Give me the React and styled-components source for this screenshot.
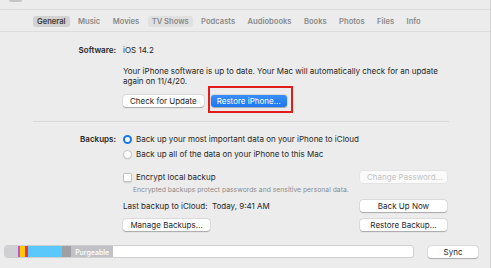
import React from "react";
import styled, { createGlobalStyle } from "styled-components";

const Global = createGlobalStyle`
  html, body { margin: 0; padding: 0; background: #ececec; }
  body { font-family: Inter, "Liberation Sans", Arial, sans-serif; -webkit-font-smoothing: antialiased; }
`;

const Window = styled.div`
  width: 491px;
  height: 268px;
  background: #ececec;
  color: #262626;
  font-size: 8px;
  overflow: hidden;
  position: relative;
  border-right: 1px solid #d4d4d4;
  box-sizing: border-box;
`;

const TopStrip = styled.div`
  height: 9px;
  border-bottom: 1px solid #dcdcdc;
  display: flex;
  padding-left: 9px;
`;

const TopNub = styled.div`
  width: 13px;
  height: 2px;
  background: #c6c6c6;
  border-radius: 0 0 3px 3px;
`;

const TabBar = styled.div`
  height: 21px;
  display: flex;
  align-items: center;
  gap: 4.4px;
  padding-left: 33px;
  border-bottom: 1px solid #dcdcdc;
`;

const Tab = styled.div`
  height: 11px;
  line-height: 11px;
  margin-top: 1px;
  padding: 0 4px;
  border-radius: 3px;
  font-weight: 600;
  font-size: 7.6px;
  color: ${(p) => (p.$active ? "#3a3a3a" : "#8a8a8a")};
  background: ${(p) => (p.$active ? "#d2d2d2" : p.$hover ? "#e0e0e0" : "transparent")};
`;

const Content = styled.div`
  padding-top: 13px;
`;

const Row = styled.div`
  display: grid;
  grid-template-columns: 116px 1fr;
  column-gap: 7px;
  width: 447px;
  align-items: start;
`;

const Label = styled.div`
  text-align: right;
  font-weight: 600;
  line-height: 11px;
`;

const Value = styled.div`
  line-height: 11px;
  white-space: nowrap;
`;

const Indent = styled.div`
  padding-left: 123px;
  width: 324px;
  margin-top: ${(p) => p.$mt || 0}px;
  display: flex;
  justify-content: ${(p) => (p.$between ? "space-between" : "flex-start")};
  align-items: center;
  gap: ${(p) => p.$gap || 0}px;
`;

const Para = styled.div`
  line-height: 10px;
  white-space: nowrap;
`;

const Button = styled.div`
  height: 12px;
  line-height: 12px;
  box-sizing: border-box;
  padding: 0 ${(p) => p.$px || 7}px;
  width: ${(p) => (p.$w ? p.$w + "px" : "auto")};
  text-align: center;
  border-radius: 3px;
  font-size: 8px;
  background: ${(p) => (p.$primary ? "linear-gradient(#3a8ef8, #1b76f0)" : "#ffffff")};
  color: ${(p) => (p.$primary ? "#ffffff" : p.$disabled ? "#b4b4b4" : "#262626")};
  box-shadow: ${(p) =>
    p.$disabled
      ? "0 0 0 0.5px rgba(0,0,0,0.08)"
      : "0 0.5px 1px rgba(0,0,0,0.25), 0 0 0 0.5px rgba(0,0,0,0.1)"};
  opacity: ${(p) => (p.$disabled ? 0.75 : 1)};
  white-space: nowrap;
`;

const Highlight = styled.div`
  border: 2px solid #e41b1b;
  padding: 7px 4px 4px 1px;
  margin: -9px 0 -6px 0;
`;

const Divider = styled.div`
  margin: 14px 0 0 33px;
  width: 416px;
  height: 1px;
  background: #d8d8d8;
`;

const OptionLine = styled.div`
  display: flex;
  align-items: center;
  gap: 4px;
  line-height: 11px;
  white-space: nowrap;
  margin-top: ${(p) => p.$mt || 0}px;
`;

const Radio = styled.div`
  width: 9px;
  height: 9px;
  border-radius: 50%;
  box-sizing: border-box;
  flex: none;
  background: #ffffff;
  border: ${(p) => (p.$on ? "2.5px solid #1a74ee" : "0.5px solid #c4c4c4")};
  box-shadow: ${(p) => (p.$on ? "none" : "0 0.5px 1px rgba(0,0,0,0.12)")};
`;

const Check = styled.div`
  width: 9px;
  height: 9px;
  border-radius: 2px;
  flex: none;
  background: #fff;
  box-sizing: border-box;
  border: 0.5px solid #c4c4c4;
  box-shadow: 0 0.5px 1px rgba(0,0,0,0.12);
`;

const Small = styled.div`
  font-size: 6.8px;
  color: #8c8c8c;
  padding-left: 133px;
  margin-top: 2px;
  line-height: 9px;
  white-space: nowrap;
`;

const Footer = styled.div`
  display: flex;
  align-items: center;
  margin-top: 14px;
  padding-left: 4px;
  gap: 14px;
`;

const Storage = styled.div`
  width: 410px;
  height: 13px;
  box-sizing: border-box;
  border-radius: 3px;
  background: #ffffff;
  border: 0.5px solid #cfcfcf;
  display: flex;
  overflow: hidden;
`;

const Seg = styled.div`
  width: ${(p) => p.$w}px;
  background: ${(p) => p.$c};
  flex: none;
  color: #ffffff;
  font-size: 7px;
  line-height: 13px;
  text-align: center;
  font-weight: 500;
`;

const Spacer = styled.div`
  height: ${(p) => p.$h}px;
`;

export default function App() {
  const tabs = ["General", "Music", "Movies", "TV Shows", "Podcasts", "Audiobooks", "Books", "Photos", "Files", "Info"];
  return (
    <Window>
      <Global />
      <TopStrip>
        <TopNub />
      </TopStrip>
      <TabBar>
        {tabs.map((t) => (
          <Tab key={t} $active={t === "General"} $hover={t === "TV Shows"}>
            {t}
          </Tab>
        ))}
      </TabBar>
      <Content>
        <Row>
          <Label>Software:</Label>
          <Value>iOS 14.2</Value>
        </Row>
        <Indent $mt={10}>
          <Para>
            Your iPhone software is up to date. Your Mac will automatically check for an update
            <br />
            again on 11/4/20.
          </Para>
        </Indent>
        <Indent $mt={9} $gap={4}>
          <Button>Check for Update</Button>
          <Highlight>
            <Button $primary $px={6}>Restore iPhone…</Button>
          </Highlight>
        </Indent>
        <Divider />
        <Spacer $h={12} />
        <Row>
          <Label>Backups:</Label>
          <div>
            <OptionLine>
              <Radio $on />
              Back up your most important data on your iPhone to iCloud
            </OptionLine>
            <OptionLine $mt={4}>
              <Radio />
              Back up all of the data on your iPhone to this Mac
            </OptionLine>
          </div>
        </Row>
        <Indent $mt={11} $between>
          <OptionLine>
            <Check />
            Encrypt local backup
          </OptionLine>
          <Button $disabled $w={87}>Change Password…</Button>
        </Indent>
        <Small>Encrypted backups protect passwords and sensitive personal data.</Small>
        <Indent $mt={6} $between>
          <Value>Last backup to iCloud:&nbsp; Today, 9:41 AM</Value>
          <Button $w={87}>Back Up Now</Button>
        </Indent>
        <Indent $mt={7} $between>
          <Button $w={87}>Manage Backups…</Button>
          <Button $w={87}>Restore Backup…</Button>
        </Indent>
        <Footer>
          <Storage>
            <Seg $w={12.5} $c="#d0d0d4" />
            <Seg $w={2.3} $c="#b45ad6" />
            <Seg $w={5} $c="#ffc700" />
            <Seg $w={3.3} $c="#f0303c" />
            <Seg $w={33.7} $c="#5ac8fa" />
            <Seg $w={9} $c="#a0a0a4" />
            <Seg $w={42.7} $c="#c2c2c6">Purgeable</Seg>
          </Storage>
          <Button $w={50}>Sync</Button>
        </Footer>
      </Content>
    </Window>
  );
}
